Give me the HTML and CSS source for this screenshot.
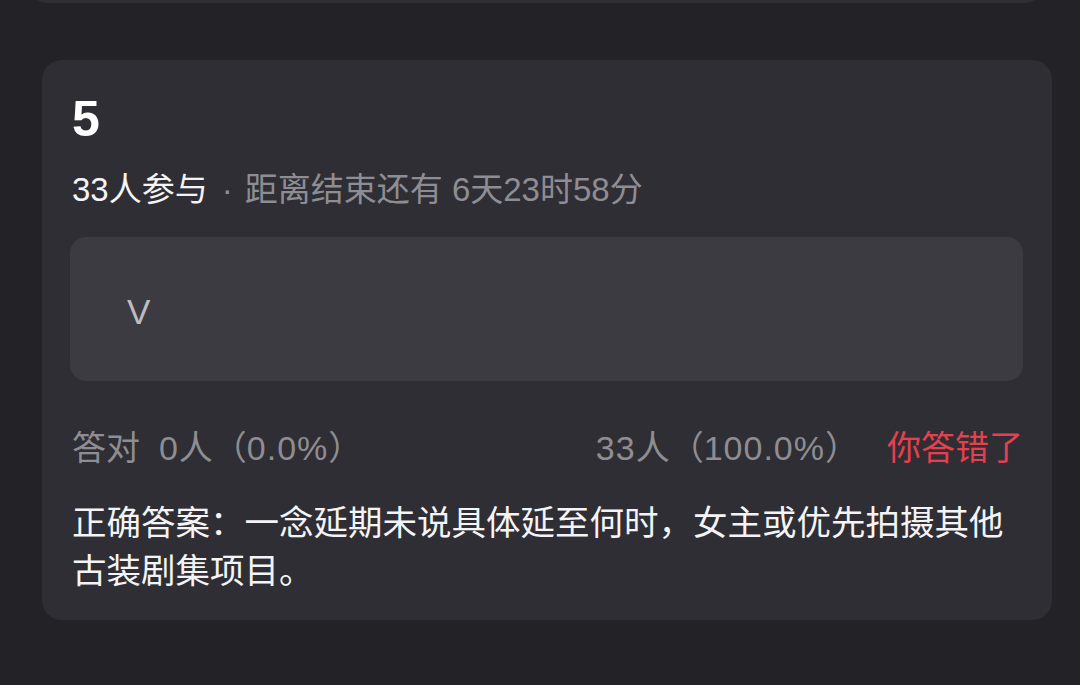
FILE: index.html
```html
<!DOCTYPE html>
<html lang="zh-CN">
<head>
<meta charset="utf-8">
<title>5</title>
<link rel="stylesheet" href="styles.css">
</head>
<body>
<div class="prev-card"></div>
<section class="card">
  <h2 class="num">5</h2>
  <p class="meta"><span class="count">33人参与</span><span class="dot">·</span><span class="remain">距离结束还有 6天23时58分</span></p>
  <div class="answer-box"><span class="answer">V</span></div>
  <div class="stats">
    <span class="stat-left">答对&nbsp;&nbsp;<span class="num-text">0</span>人（<span class="num-text">0.0%</span>）</span>
    <span class="stat-right"><span class="wrong-count"><span class="num-text">33</span>人（<span class="num-text">100.0%</span>）</span><span class="wrong">你答错了</span></span>
  </div>
  <p class="correct">正确答案：一念延期未说具体延至何时，女主或优先拍摄其他古装剧集项目。</p>
</section>
</body>
</html>
```

FILE: styles.css
```css
html, body {
  margin: 0;
  padding: 0;
  background: #232227;
}
body {
  width: 1080px;
  height: 685px;
  overflow: hidden;
  font-family: "Liberation Sans", "Noto Sans CJK SC", sans-serif;
  color: #f4f4f6;
}
.prev-card {
  height: 24px;
  margin: -21px 36px 0 28px;
  background: #2f2e34;
  border-radius: 0 0 20px 20px;
}
.card {
  margin: 57px 28px 0 42px;
  background: #2f2e34;
  border-radius: 20px;
  padding: 29px 29px 25px 28px;
}
.num {
  margin: 0 0 0 2px;
  font-size: 50px;
  line-height: 60px;
  font-weight: 700;
  color: #ffffff;
}
.meta {
  margin: 19px 0 0 2px;
  font-size: 33px;
  line-height: 44px;
  color: #8e8d93;
}
.meta .count {
  color: #f4f4f6;
}
.meta .dot {
  margin: 0 12px 0 14px;
  color: #8e8d93;
}
.answer-box {
  margin-top: 25px;
  height: 144px;
  background: #3c3b41;
  border-radius: 16px;
  display: flex;
  align-items: center;
  padding-left: 57px;
}
.answer {
  font-size: 35px;
  color: #bdbcc2;
  padding-top: 6px;
}
.stats {
  margin-top: 45px;
  display: flex;
  justify-content: space-between;
  font-size: 34px;
  line-height: 44px;
  color: #8e8d93;
  padding-left: 2px;
}
.num-text {
  letter-spacing: 1px;
}
.stat-right {
  display: flex;
  gap: 28px;
}
.wrong {
  color: #e4404e;
}
.correct {
  margin: 29px 0 0 2px;
  font-size: 34.5px;
  line-height: 48px;
  color: #f4f4f6;
}
```
